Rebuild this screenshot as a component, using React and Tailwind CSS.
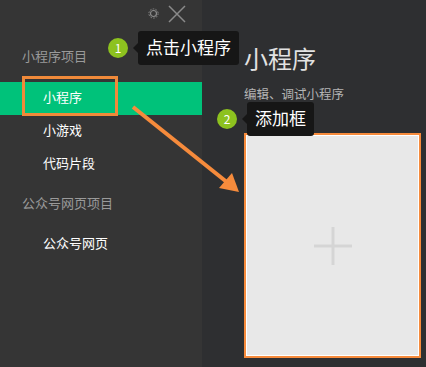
import React from 'react';

const font = { fontFamily: '"Microsoft YaHei", "Noto Sans CJK SC", "Noto Sans", sans-serif' };

const Tip = ({ n, text, className }) => (
  <div className={`absolute flex items-center ${className}`}>
    <div className="w-5 h-5 rounded-full bg-[#8dc21f] text-white text-[12px] leading-none flex items-center justify-center">
      {n}
    </div>
    <div className="ml-[10px] relative bg-[#161616] text-white text-[17px] h-[34px] px-2 pb-[2px] flex items-center rounded-[3px]">
      <span className="absolute -left-[5px] top-1/2 -translate-y-1/2 w-0 h-0 border-y-[5px] border-y-transparent border-r-[5px] border-r-[#161616]"></span>
      {text}
    </div>
  </div>
);

export default function App() {
  return (
    <div className="relative w-[426px] h-[367px] flex overflow-hidden bg-[#2e2f31]" style={font}>
      {/* Sidebar */}
      <div className="w-[202px] h-full bg-[#353535] flex flex-col pt-[46px]">
        <div className="pl-[22px] text-[13px] leading-5 text-[#9a9a9a]">小程序项目</div>
        <div className="mt-4 h-[33px] bg-[#00c27a] pl-[43px] pb-[4px] flex items-center text-[13px] text-white">小程序</div>
        <div className="h-[33px] pl-[43px] pb-[4px] flex items-center text-[13px] text-white">小游戏</div>
        <div className="h-[33px] pl-[43px] pb-[4px] flex items-center text-[13px] text-white">代码片段</div>
        <div className="mt-3 pl-[22px] text-[13px] leading-5 text-[#9a9a9a]">公众号网页项目</div>
        <div className="mt-[15px] h-[33px] pl-[43px] pb-[4px] flex items-center text-[13px] text-white">公众号网页</div>
      </div>

      {/* Main */}
      <div className="flex-1 pl-[42px] pt-[42px] flex flex-col">
        <div className="text-[24px] leading-8 text-[#e2e2e2]">小程序</div>
        <div className="mt-[11px] text-[12.5px] leading-[18px] text-[#b4b4b4]">编辑、调试小程序</div>
        <div className="mt-[30px] w-[177px] h-[225px] border-2 border-[#f68b3c]">
          <div className="w-full h-full border border-white bg-[#e8e8e8] flex items-center justify-center">
            <svg width="38" height="38" viewBox="0 0 38 38">
              <rect x="17.5" y="0" width="3" height="38" fill="#d5d5d5" />
              <rect x="0" y="17.5" width="38" height="3" fill="#d5d5d5" />
            </svg>
          </div>
        </div>
      </div>

      {/* Title bar icons */}
      <svg className="absolute left-[148px] top-[8px]" width="11" height="11" viewBox="0 0 11 11">
        <circle cx="5.5" cy="5.5" r="3" fill="none" stroke="#8a8a8a" strokeWidth="1.2" />
        <circle cx="5.5" cy="5.5" r="4.6" fill="none" stroke="#8a8a8a" strokeWidth="1" strokeDasharray="1.6 1.3" />
      </svg>
      <svg className="absolute left-[168px] top-[5px]" width="18" height="18" viewBox="0 0 18 18">
        <path d="M1 1 L17 17 M17 1 L1 17" stroke="#8a8a8a" strokeWidth="1.5" />
      </svg>

      {/* Highlight on selected item */}
      <div className="absolute left-[22px] top-[76px] w-[96px] h-[40px] border-[3px] border-[#f08a3a]"></div>

      {/* Arrow */}
      <svg className="absolute left-0 top-0 pointer-events-none" width="426" height="367" viewBox="0 0 426 367">
        <line x1="133" y1="107" x2="228" y2="183" stroke="#f68b3c" strokeWidth="4" />
        <polygon points="239,192 219,188 232,173" fill="#f68b3c" />
      </svg>

      <Tip n="1" text="点击小程序" className="left-[108px] top-[31px]" />
      <Tip n="2" text="添加框" className="left-[217px] top-[102px]" />
    </div>
  );
}
